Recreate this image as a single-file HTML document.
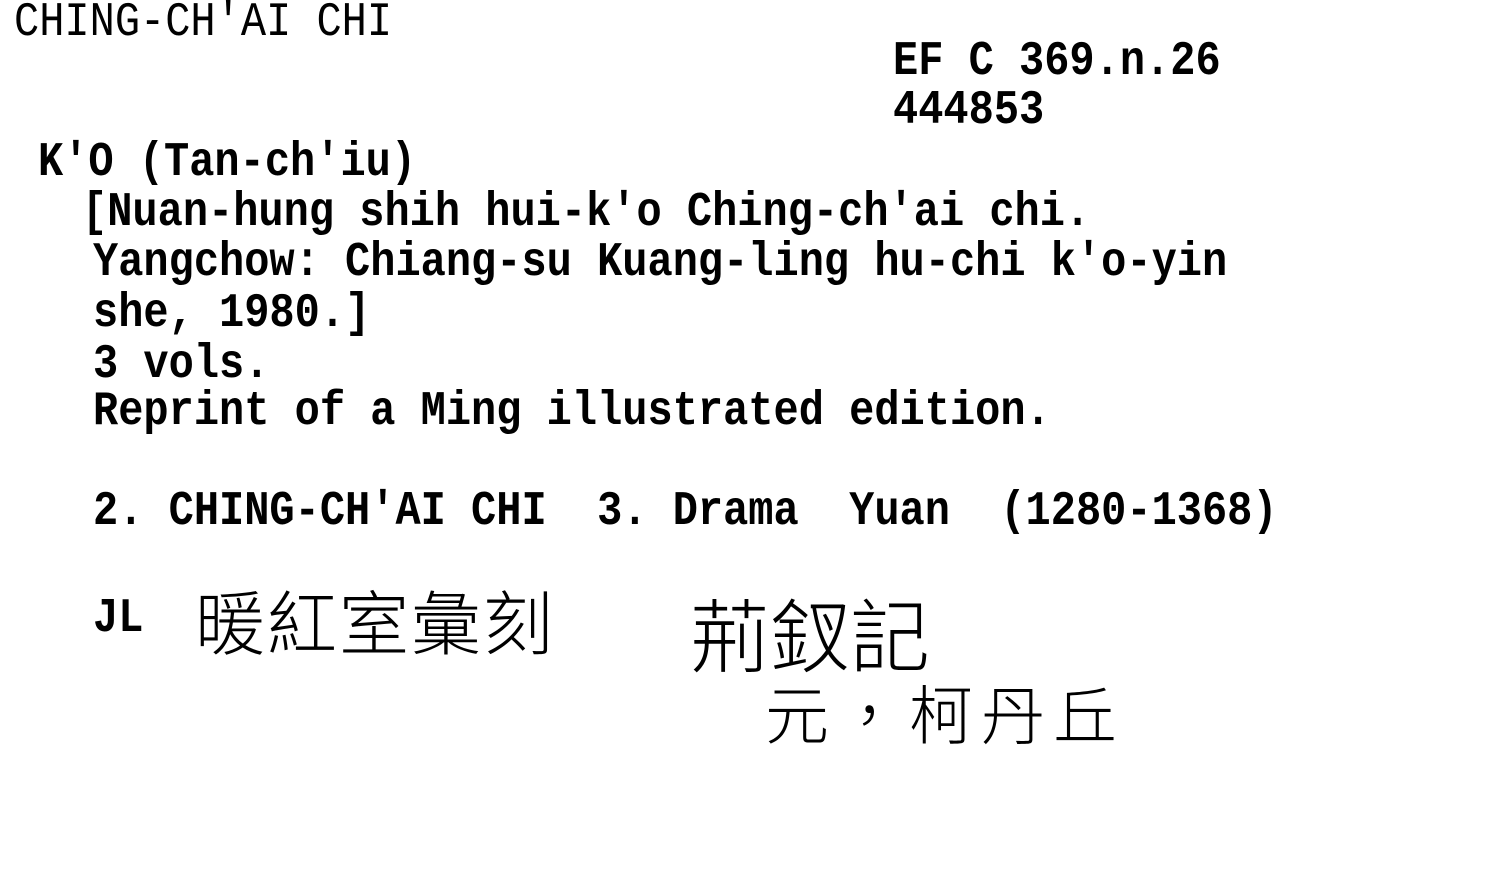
<!DOCTYPE html>
<html><head><meta charset="utf-8"><style>
html,body{margin:0;padding:0;background:#fff;}
body{width:1486px;height:878px;position:relative;overflow:hidden;}
.t{position:absolute;white-space:pre;font-family:"Liberation Mono",monospace;font-weight:bold;font-size:42px;line-height:42px;color:#000;transform:scaleY(1.15);transform-origin:0 0;}
.c{position:absolute;white-space:pre;font-family:"Noto Sans CJK TC","WenQuanYi Zen Hei",sans-serif;color:#000;font-weight:300;}
</style></head><body>
<div class="t" style="left:14px;top:-2px;font-weight:normal;">CHING-CH'AI CHI</div>
<div class="t" style="left:893px;top:37px;">EF C 369.n.26</div>
<div class="t" style="left:893px;top:86px;">444853</div>
<div class="t" style="left:38px;top:138px;">K'O (Tan-ch'iu)</div>
<div class="t" style="left:82px;top:188px;">[Nuan-hung shih hui-k'o Ching-ch'ai chi.</div>
<div class="t" style="left:93px;top:238px;">Yangchow: Chiang-su Kuang-ling hu-chi k'o-yin</div>
<div class="t" style="left:93px;top:289px;">she, 1980.]</div>
<div class="t" style="left:93px;top:340px;">3 vols.</div>
<div class="t" style="left:93px;top:387px;">Reprint of a Ming illustrated edition.</div>
<div class="t" style="left:93px;top:487px;">2. CHING-CH'AI CHI  3. Drama  Yuan  (1280-1368)</div>
<div class="t" style="left:93px;top:594px;">JL</div>
<div class="c" style="left:195px;top:585px;font-size:70px;line-height:70px;letter-spacing:2px;">暖紅室彙刻</div>
<div class="c" style="left:690px;top:592px;font-size:80px;line-height:80px;">荊釵記</div>
<div class="c" style="left:765px;top:680px;font-size:64px;line-height:64px;letter-spacing:8px;">元，柯丹丘</div>
</body></html>
